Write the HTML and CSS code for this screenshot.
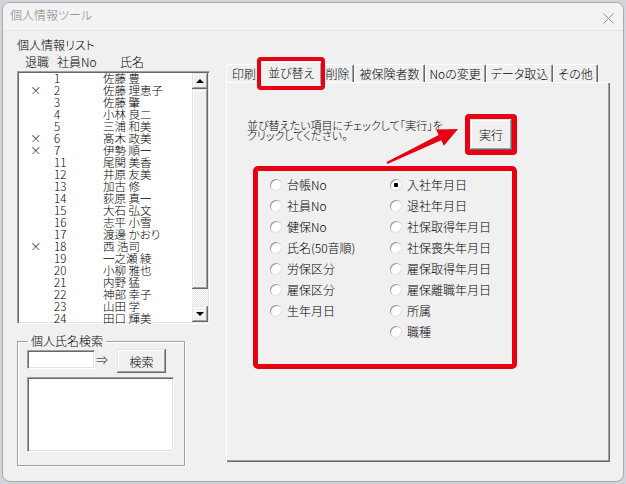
FILE: index.html
```html
<!DOCTYPE html>
<html>

<head>
    <meta charset="utf-8">
    <title>個人情報ツール</title>
    <link rel="stylesheet" href="styles.css">
</head>

<body>
    <div class="window">
        <div class="titlebar">
            <span class="title">個人情報ツール</span>
            <svg class="close" width="11" height="11" viewBox="0 0 11 11">
                <path d="M0.5 0.5 L10.5 10.5 M10.5 0.5 L0.5 10.5" stroke="#8c8c8c" stroke-width="1" fill="none" />
            </svg>
        </div>

        <div class="client">
            <!-- left side: employee list + name search -->
            <div class="leftpane">
                <div class="caption">個人情報リスト</div>
                <div class="listhead">
                    <span>退職</span><span>社員No</span><span>氏名</span>
                </div>
                <div class="listbox">
                    <div class="rows">
                        <div class="row"><span></span><span>1</span><span>佐藤 豊</span></div>
                        <div class="row"><span>×</span><span>2</span><span>佐藤 理恵子</span></div>
                        <div class="row"><span></span><span>3</span><span>佐藤 肇</span></div>
                        <div class="row"><span></span><span>4</span><span>小林 良二</span></div>
                        <div class="row"><span></span><span>5</span><span>三浦 和美</span></div>
                        <div class="row"><span>×</span><span>6</span><span>髙木 政美</span></div>
                        <div class="row"><span>×</span><span>7</span><span>伊勢 順一</span></div>
                        <div class="row"><span></span><span>11</span><span>尾関 美香</span></div>
                        <div class="row"><span></span><span>12</span><span>井原 友美</span></div>
                        <div class="row"><span></span><span>13</span><span>加古 修</span></div>
                        <div class="row"><span></span><span>14</span><span>荻原 真一</span></div>
                        <div class="row"><span></span><span>15</span><span>大石 弘文</span></div>
                        <div class="row"><span></span><span>16</span><span>志平 小雪</span></div>
                        <div class="row"><span></span><span>17</span><span>渡邊 かおり</span></div>
                        <div class="row"><span>×</span><span>18</span><span>西 浩司</span></div>
                        <div class="row"><span></span><span>19</span><span>一之瀬 綾</span></div>
                        <div class="row"><span></span><span>20</span><span>小柳 雅也</span></div>
                        <div class="row"><span></span><span>21</span><span>内野 猛</span></div>
                        <div class="row"><span></span><span>22</span><span>神部 幸子</span></div>
                        <div class="row"><span></span><span>23</span><span>山田 学</span></div>
                        <div class="row"><span></span><span>24</span><span>田口 輝美</span></div>
                    </div>
                    <div class="vscroll">
                        <div class="sbtn"><i class="arrow-up"></i></div>
                        <div class="thumb"></div>
                        <div class="track"></div>
                        <div class="sbtn"><i class="arrow-down"></i></div>
                    </div>
                </div>

                <fieldset class="group">
                    <legend>個人氏名検索</legend>
                    <div class="searchrow">
                        <input type="text" class="namebox">
                        <span class="goto">⇒</span>
                        <button class="btn search">検索</button>
                    </div>
                    <div class="results"></div>
                </fieldset>
            </div>

            <!-- right side: tabbed settings -->
            <div class="rightpane">
                <div class="tabs">
                    <div class="tab">印刷</div>
                    <div class="tab active">並び替え</div>
                    <div class="tab">削除</div>
                    <div class="tab">被保険者数</div>
                    <div class="tab">Noの変更</div>
                    <div class="tab">データ取込</div>
                    <div class="tab">その他</div>
                </div>
                <div class="panel">
                    <div class="topline">
                        <div class="howto">並び替えたい項目にチェックして「実行」を<br>クリックしてください。</div>
                        <div class="exec-mark"><button class="btn exec">実行</button></div>
                    </div>

                    <div class="options">
                        <label class="opt"><span class="radio"></span>台帳No</label>
                        <label class="opt"><span class="radio on"></span>入社年月日</label>
                        <label class="opt"><span class="radio"></span>社員No</label>
                        <label class="opt"><span class="radio"></span>退社年月日</label>
                        <label class="opt"><span class="radio"></span>健保No</label>
                        <label class="opt"><span class="radio"></span>社保取得年月日</label>
                        <label class="opt"><span class="radio"></span>氏名(50音順)</label>
                        <label class="opt"><span class="radio"></span>社保喪失年月日</label>
                        <label class="opt"><span class="radio"></span>労保区分</label>
                        <label class="opt"><span class="radio"></span>雇保取得年月日</label>
                        <label class="opt"><span class="radio"></span>雇保区分</label>
                        <label class="opt"><span class="radio"></span>雇保離職年月日</label>
                        <label class="opt"><span class="radio"></span>生年月日</label>
                        <label class="opt"><span class="radio"></span>所属</label>
                        <span></span>
                        <label class="opt"><span class="radio"></span>職種</label>
                    </div>

                    <svg class="pointer" width="80" height="46" viewBox="0 0 80 46">
                        <polygon points="3.6,40.1 55.7,12.9 53.1,7.5 75,7 60.9,23.7 58.3,18.3 4.4,41.9" fill="#e60012" />
                    </svg>
                </div>
            </div>
        </div>
    </div>
</body>

</html>
```

FILE: styles.css
```css
body {
    margin: 0;
    background: #cfd5db;
    font-family: "Noto Sans CJK JP", sans-serif;
    font-size: 12px;
    font-weight: 300;
    font-feature-settings: "palt";
    color: #000;
}

.window {
    margin: 2px 0 0 2px;
    width: 622px;
    height: 480px;
    box-sizing: border-box;
    border: 1px solid #a9a9a9;
    border-radius: 8px;
    background: #f0f0f0;
    overflow: hidden;
}

.titlebar {
    height: 28px;
    background: #f3f3f3;
    border-bottom: 1px solid #e4e4e4;
    display: flex;
    justify-content: space-between;
    align-items: flex-start;
    padding: 5px 9px 0 7px;
    box-sizing: border-box;
}

.title {
    line-height: 14px;
    color: #858585;
}

.close {
    margin-top: 5px;
}

.client {
    display: flex;
    gap: 16px;
    padding: 7px 0 0 14px;
}

/* ---------- left pane ---------- */
.leftpane {
    width: 193px;
}

.caption {
    line-height: 14px;
}

.listhead {
    display: grid;
    grid-template-columns: 32px 63px auto;
    padding-left: 8px;
    margin-top: 3px;
    line-height: 14px;
}

.listbox {
    display: flex;
    height: 253px;
    margin-top: 2px;
    box-sizing: border-box;
    padding: 1px;
    background: #fff;
    border: 1px solid;
    border-color: #a0a0a0 #fff #fff #a0a0a0;
    box-shadow: inset 1px 1px #696969, inset -1px -1px #e3e3e3;
}

.rows {
    flex: 1;
    margin-top: -1px;
    font-size: 11.5px;
}

.row {
    display: grid;
    grid-template-columns: 35px 49px 1fr;
    height: 12px;
    line-height: 12px;
    white-space: nowrap;
}

.row span:first-child {
    padding-left: 11px;
}

.vscroll {
    width: 16px;
    display: flex;
    flex-direction: column;
}

.sbtn,
.thumb,
.btn {
    background: #f0f0f0;
    box-shadow: inset -1px -1px #696969, inset 1px 1px #e3e3e3, inset -2px -2px #a0a0a0, inset 2px 2px #fff;
}

.sbtn {
    height: 16px;
    display: flex;
    align-items: center;
    justify-content: center;
}

.thumb {
    height: 200px;
}

.track {
    flex: 1;
    background: repeating-conic-gradient(#fff 0 25%, #e4e4e4 0 50%) 0 0 / 2px 2px;
}

.arrow-up,
.arrow-down {
    width: 0;
    height: 0;
    border-left: 4px solid transparent;
    border-right: 4px solid transparent;
}

.arrow-up {
    border-bottom: 4px solid #000;
}

.arrow-down {
    border-top: 4px solid #000;
}

.group {
    margin: 10px 0 0;
    width: 168px;
    box-sizing: border-box;
    padding: 0 10px 13px 9px;
    border: 1px solid #a0a0a0;
    box-shadow: inset 1px 1px #fff, 1px 1px #fff;
}

.group legend {
    padding: 0 3px;
    margin-left: 1px;
    line-height: 14px;
    background: #f0f0f0;
}

.searchrow {
    display: flex;
    align-items: flex-start;
}

.namebox,
.results {
    box-sizing: border-box;
    background: #fff;
    border: 1px solid;
    border-color: #a0a0a0 #fff #fff #a0a0a0;
    box-shadow: inset 1px 1px #696969, inset -1px -1px #e3e3e3;
}

.namebox {
    width: 68px;
    height: 19px;
    margin: 2px 0 0;
    padding: 0;
    outline: none;
}

.goto {
    width: 22px;
    padding-left: 1px;
    box-sizing: border-box;
    margin-top: 5px;
    line-height: 14px;
}

.btn {
    border: none;
    font-family: inherit;
    font-size: 12px;
    font-weight: 300;
    font-feature-settings: "palt";
    color: #000;
    padding: 0;
}

.search {
    width: 49px;
    height: 24px;
    margin-top: 1px;
}

.results {
    width: 147px;
    height: 75px;
    margin-top: 4px;
}

/* ---------- right pane ---------- */
.rightpane {
    width: 384px;
    margin-top: 26px;
}

.tabs {
    display: flex;
    align-items: flex-end;
    height: 18px;
}

.tab {
    position: relative;
    height: 18px;
    line-height: 17px;
    padding: 0 4px;
    box-sizing: border-box;
    border-top: 1px solid #fff;
    border-left: 1px solid #fff;
    border-right: 1px solid #696969;
    border-radius: 2px 2px 0 0;
    box-shadow: inset -1px 0 #a0a0a0;
    white-space: nowrap;
}

.tab:first-child {
    padding: 0 5px;
}

.tab.active {
    height: 22px;
    margin: 0 -2px -2px;
    padding: 0 7px;
    line-height: 19px;
    background: #f0f0f0;
    z-index: 1;
}

/* red annotation around the selected tab */
.tab.active::after {
    content: "";
    position: absolute;
    left: -4px;
    top: -6px;
    right: -4px;
    bottom: -6px;
    border: 4px solid #e60012;
    border-radius: 4px;
}

.panel {
    position: relative;
    height: 380px;
    box-sizing: border-box;
    padding: 32px 93px 0 21px;
    box-shadow: inset 1px 1px #fff, inset -1px -1px #696969, inset -2px -2px #a0a0a0;
}

.topline {
    display: flex;
    justify-content: space-between;
    align-items: flex-start;
}

.howto {
    margin-top: 6px;
    font-size: 11px;
    line-height: 10px;
    white-space: nowrap;
}

.exec-mark {
    width: 52px;
    height: 41px;
    box-sizing: border-box;
    border: 5px solid #e60012;
    border-radius: 4px;
}

.exec {
    display: block;
    width: 100%;
    height: 100%;
}

.options {
    margin: 11px 0 0 6px;
    height: 203px;
    box-sizing: border-box;
    border: 5px solid #e60012;
    border-radius: 5px;
    padding: 3px 0 0 12px;
    display: grid;
    grid-template-columns: 120px 1fr;
    grid-auto-rows: 21px;
}

.opt {
    display: flex;
    align-items: center;
    gap: 5px;
    white-space: nowrap;
}

.radio {
    width: 12px;
    height: 12px;
    border-radius: 50%;
    background: #fff;
    box-shadow: inset 1px 1px 0 #9a9a9a, inset -1px -1px 0 #e3e3e3;
}

.radio.on {
    background: radial-gradient(circle, #000 0 2px, #fff 2.5px);
}

.pointer {
    position: absolute;
    left: 157px;
    top: 40px;
}
```
